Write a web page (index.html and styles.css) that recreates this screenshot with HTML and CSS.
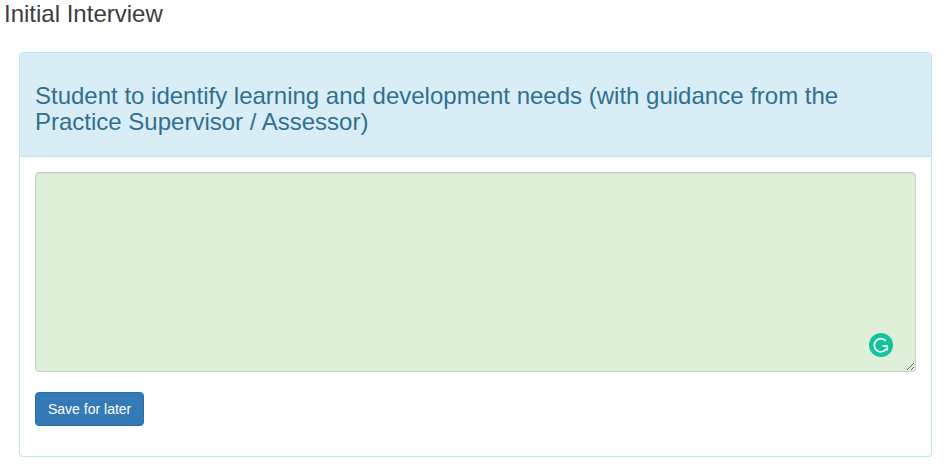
FILE: index.html
```html
<!DOCTYPE html>
<html lang="en">
<head>
<meta charset="utf-8">
<title>Initial Interview</title>
<link rel="stylesheet" href="styles.css">
</head>
<body>
<h3 class="page-title">Initial Interview</h3>
<section class="panel">
  <header class="panel-heading">
    <h3 class="panel-title">Student to identify learning and development needs (with guidance from the Practice Supervisor / Assessor)</h3>
  </header>
  <div class="panel-body">
    <div class="field">
      <textarea class="answer"></textarea>
      <span class="grammarly">
        <svg viewBox="0 0 24 24" width="24" height="24" aria-hidden="true">
          <circle cx="12" cy="12" r="12" fill="#15c39a"/>
          <path d="M16.8 7.9A6.6 6.6 0 1 0 17.4 15.8" fill="none" stroke="#fff" stroke-width="1.7"/>
          <path d="M13.6 13h4.6v4.6" fill="none" stroke="#fff" stroke-width="1.7"/>
        </svg>
      </span>
    </div>
    <button class="btn" type="button">Save for later</button>
  </div>
</section>
</body>
</html>
```
FILE: styles.css
```css
* { box-sizing: border-box; }
html, body { margin: 0; padding: 0; }
body {
  background: #fff;
  color: #333;
  font-family: "Liberation Sans", Arial, sans-serif;
  font-size: 14px;
  line-height: 20px;
}
.page-title {
  margin: 0 0 25px 4px;
  padding-top: 1px;
  color: #3d3d3d;
  font-size: 24px;
  font-weight: 400;
  line-height: 26.4px;
}
.panel {
  width: 913px;
  margin-left: 19px;
  background: #fff;
  border: 1px solid #bce8f1;
  border-radius: 4px;
  box-shadow: 0 1px 1px rgba(0, 0, 0, .05);
}
.panel-heading {
  padding: 10px 15px;
  background: #d9edf7;
  border-bottom: 1px solid #bce8f1;
  border-radius: 3px 3px 0 0;
  color: #31708f;
}
.panel-title {
  margin: 20px 0 10.8px;
  font-size: 24px;
  font-weight: 400;
  line-height: 26px;
}
.panel-body { padding: 15px; }
.field { position: relative; margin-bottom: 20px; }
.answer {
  display: block;
  width: 100%;
  height: 200px;
  padding: 6px 12px;
  background: #dff0d8;
  border: 1px solid #ccc;
  border-radius: 4px;
  box-shadow: inset 0 1px 1px rgba(0, 0, 0, .075);
  font: inherit;
  color: #555;
  outline: none;
}
.grammarly {
  position: absolute;
  right: 23px;
  bottom: 15px;
  display: flex;
  width: 24px;
  height: 24px;
}
.btn {
  display: block;
  height: 34px;
  margin-bottom: 15px;
  padding: 6px 12px;
  background: #337ab7;
  border: 1px solid #2e6da4;
  border-radius: 4px;
  color: #fff;
  font: inherit;
  cursor: pointer;
}
```
